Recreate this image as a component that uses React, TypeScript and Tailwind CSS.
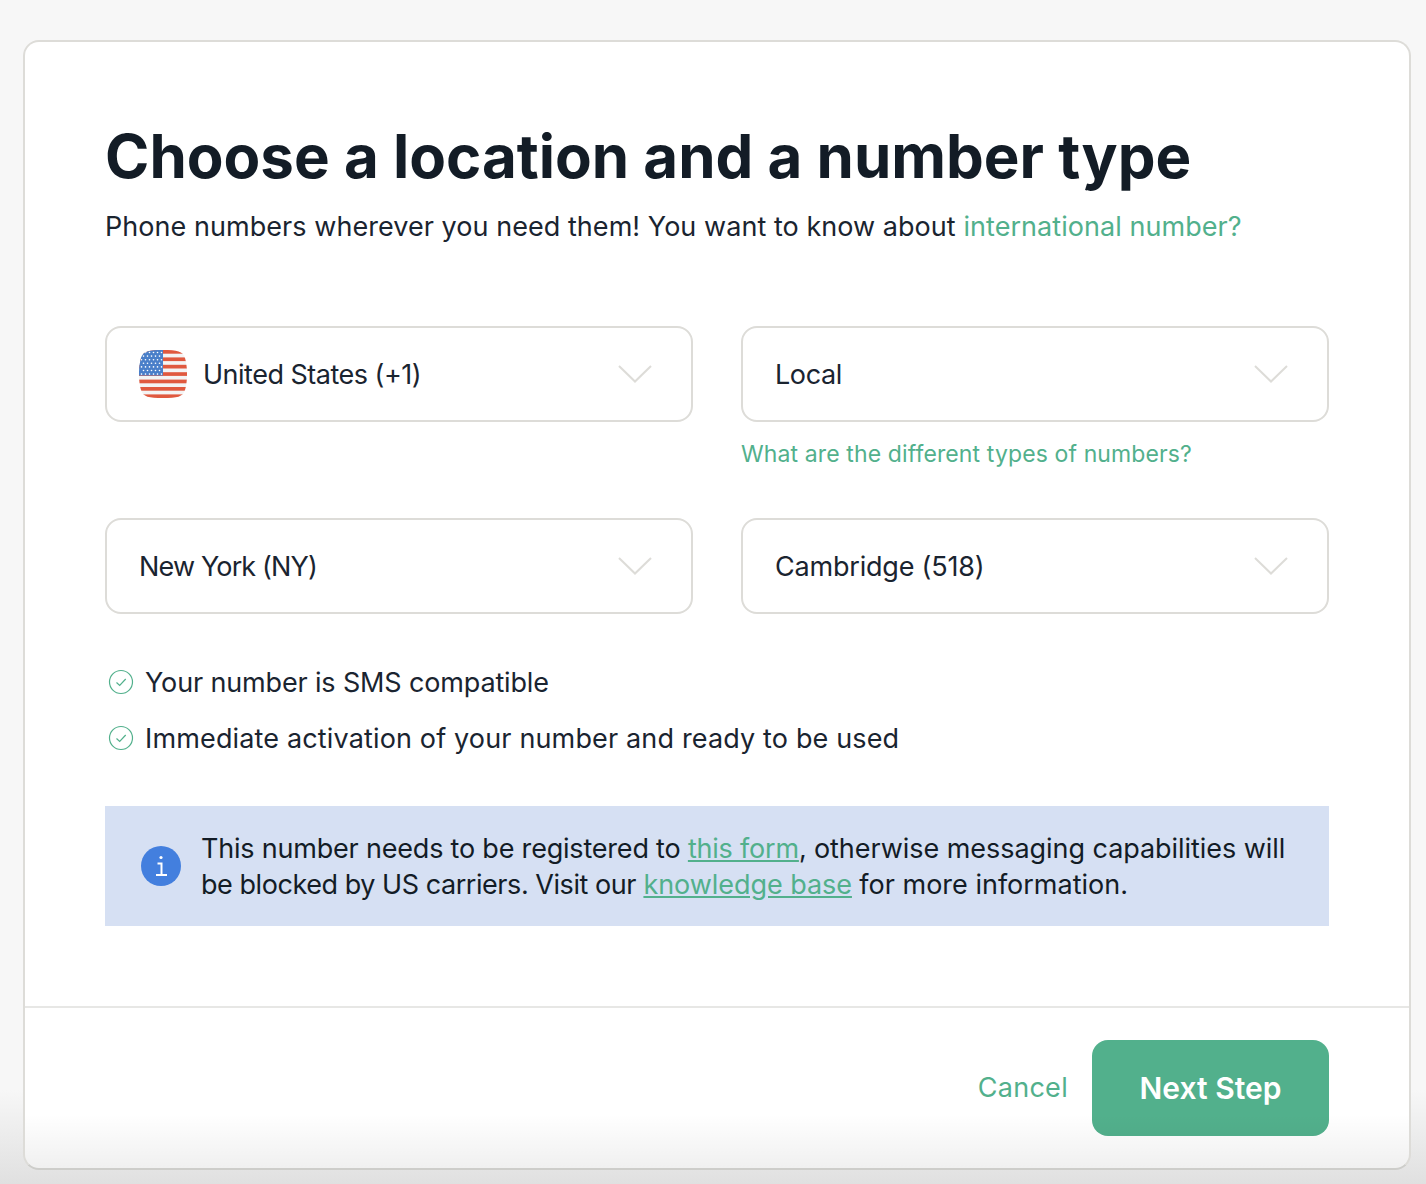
import React from 'react';

const Chevron = () => (
  <svg width="34" height="18" viewBox="0 0 34 18" fill="none" stroke="#dddcd8" strokeWidth="2" className="shrink-0">
    <path d="M1 1l16 15.500L33 1" />
  </svg>
);

const Flag = () => {
  const stripes = [0, 1, 2, 3, 4, 5, 6];
  const stars: [number, number][] = [];
  for (let row = 0; row < 7; row++) {
    for (let col = 0; col < (row % 2 ? 5 : 6); col++) {
      stars.push([2.5 + col * 4 + (row % 2 ? 2 : 0), 2.5 + row * 3.6]);
    }
  }
  return (
    <svg width="48" height="48" viewBox="0 0 48 48" className="mr-4 shrink-0">
      <defs>
        <clipPath id="flag-shape">
          <path d="M24 0C38 0 44 1 46 8c2.700 9 2.700 23 0 32-2 7-8 8-22 8S4 47 2 40C-.7 31-.7 17 2 8 4 1 10 0 24 0z" />
        </clipPath>
      </defs>
      <g clipPath="url(#flag-shape)">
        <rect width="48" height="48" fill="#f4f4f4" />
        {stripes.map((i) => (
          <rect key={i} y={i * 7.4} width="48" height="3.700" fill="#e0593f" />
        ))}
        <rect width="24" height="25.500" fill="#4a7fc9" />
        {stars.map(([x, y], i) => (
          <circle key={i} cx={x} cy={y} r="0.800" fill="#ffffff" />
        ))}
      </g>
    </svg>
  );
};

const Check = () => (
  <svg width="26" height="26" viewBox="0 0 26 26" fill="none" stroke="#52b08c" strokeWidth="1.200" className="shrink-0">
    <circle cx="13" cy="13" r="11.500" />
    <path d="M8.500 13.500l3.200 3 6-6.500" />
  </svg>
);

const Select = ({ label, flag, tracking = 'tracking-[-0.4px]' }: { label: string; flag?: boolean; tracking?: string }) => (
  <div className="flex h-24 items-center rounded-2xl border-2 border-[#dddcd8] bg-white pl-8 pr-[39px]">
    {flag && <Flag />}
    <span className={`flex-1 pt-[2px] text-[27px] text-[#1a2430] ${tracking}`}>{label}</span>
    <Chevron />
  </div>
);

export default function App() {
  return (
    <div className="h-[1184px] overflow-hidden bg-[linear-gradient(#f7f7f7_1090px,#e0e0e0_1184px)] pl-[23px] pr-[15px] pt-[40px] font-['Inter',sans-serif]">
      <div className="relative h-[1130px] overflow-hidden rounded-2xl border-2 border-[#dddcd8] border-b-[#cdcdca] bg-white">
        <div className="h-[964px] px-[80px] pt-[76px]">
          <h1 className="text-[60px] font-bold leading-[76px] text-[#131c26]">Choose a location and a number type</h1>
          <p className="mt-[15px] text-[27px] leading-[36px] tracking-[0.05px] text-[#1a2430]">
            Phone numbers wherever you need them! You want to know about{' '}
            <span className="text-[#52b08c]">international number?</span>
          </p>

          <div className="mt-[81px] grid grid-cols-2 gap-x-12">
            <Select label="United States (+1)" flag tracking="tracking-[-0.5px]" />
            <div>
              <Select label="Local" />
            </div>
          </div>
          <div className="grid grid-cols-2 gap-x-12">
            <div />
            <p className="mt-4 h-[80px] text-[23px] leading-8 tracking-[0.12px] text-[#52b08c]">What are the different types of numbers?</p>
          </div>
          <div className="grid grid-cols-2 gap-x-12">
            <Select label="New York (NY)" tracking="tracking-[-0.85px]" />
            <Select label="Cambridge (518)" tracking="tracking-[-0.2px]" />
          </div>

          <ul className="mt-[50px] flex flex-col gap-5 pl-[3px] text-[27px] leading-9 text-[#1a2430]">
            <li className="flex h-9 items-center gap-[11px]">
              <Check />
              <span className="pt-[2px] tracking-[-0.15px]">Your number is SMS compatible</span>
            </li>
            <li className="flex h-9 items-center gap-[11px]">
              <Check />
              <span className="pt-[2px] tracking-[0.15px]">Immediate activation of your number and ready to be used</span>
            </li>
          </ul>

          <div className="mt-[50px] flex h-[120px] items-center gap-5 bg-[#d6e0f3] pl-9">
            <div className="flex h-10 w-10 shrink-0 items-center justify-center rounded-full bg-[#437fde]">
              <svg width="14" height="24" viewBox="0 0 14 24" fill="none" stroke="#ffffff" strokeWidth="2">
                <circle cx="7" cy="3.500" r="1.600" fill="#ffffff" stroke="none" />
                <path d="M3.500 9.500H7.500V21M2 21h11" />
              </svg>
            </div>
            <p className="whitespace-nowrap pt-[2px] text-[27px] leading-9 tracking-[-0.2px] text-[#131c26]">
              This number needs to be registered to <span className="text-[#52b08c] underline">this form</span>,{' '}
              <span className="tracking-[-0.05px]">otherwise messaging capabilities will</span>
              <br />
              <span className="tracking-[-0.45px]">be blocked by US carriers. Visit our</span>{' '}
              <span className="text-[#52b08c] underline tracking-[-0.05px]">knowledge base</span>{' '}
              <span className="tracking-[0px]">for more information.</span>
            </p>
          </div>
        </div>

        <div className="flex h-[162px] items-start justify-end gap-6 border-t-2 border-[#e7e7e5] px-[80px] pt-[32px]">
          <span className="flex h-24 items-center text-[27px] tracking-[0.3px] text-[#52b08c]">Cancel</span>
          <button className="h-24 w-[237px] rounded-2xl bg-[#52b08c] text-[30px] font-semibold text-white">Next Step</button>
        </div>

        {/* window shadow fading in at the bottom of the screenshot */}
        <div className="pointer-events-none absolute inset-x-0 bottom-0 h-[54px] bg-gradient-to-b from-transparent to-black/[0.06]" />
      </div>
    </div>
  );
}
